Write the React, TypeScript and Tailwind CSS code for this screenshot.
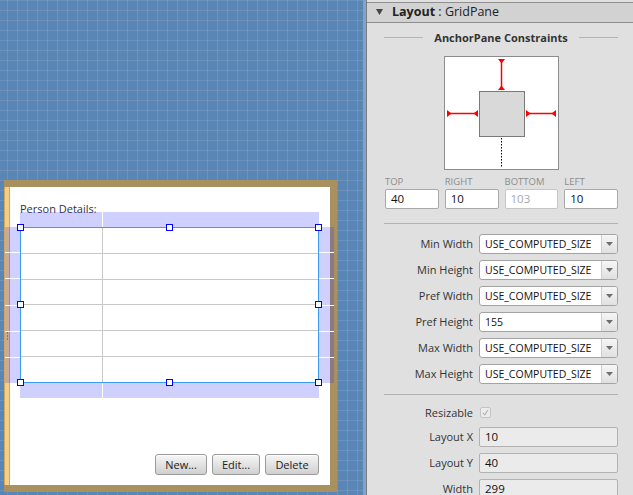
import React from "react";

const sizeRows = [
  { label: "Min Width", value: "USE_COMPUTED_SIZE" },
  { label: "Min Height", value: "USE_COMPUTED_SIZE" },
  { label: "Pref Width", value: "USE_COMPUTED_SIZE" },
  { label: "Pref Height", value: "155" },
  { label: "Max Width", value: "USE_COMPUTED_SIZE" },
  { label: "Max Height", value: "USE_COMPUTED_SIZE" },
];

const anchors = [
  { label: "TOP", value: "40", disabled: false },
  { label: "RIGHT", value: "10", disabled: false },
  { label: "BOTTOM", value: "103", disabled: true },
  { label: "LEFT", value: "10", disabled: false },
];

function Handle({ className }: { className: string }) {
  return <div className={`absolute z-20 h-[7px] w-[7px] border-[1.5px] border-[#0000ff] bg-white ${className}`} />;
}

// lavender band with white divider lines, drawn around the selected GridPane
function RowBand({ className }: { className: string }) {
  return (
    <div className={`absolute top-0 bottom-0 z-10 flex w-[15px] flex-col divide-y divide-white bg-[rgba(40,40,255,0.22)] ${className}`}>
      {[0, 1, 2, 3, 4, 5].map((i) => (
        <div key={i} className="flex-1" />
      ))}
    </div>
  );
}

function ColBand({ className }: { className: string }) {
  return (
    <div className={`absolute left-0 right-0 z-10 flex h-[15px] bg-[rgba(40,40,255,0.22)] ${className}`}>
      <div className="w-[83px] border-r border-white" />
      <div className="flex-1" />
    </div>
  );
}

function Canvas() {
  return (
    <div className="relative h-full w-[366px] shrink-0 border-r-[3px] border-[#7fa3ca] bg-[#5a86b6] bg-[linear-gradient(to_right,rgba(255,255,255,0.1)_1px,transparent_1px),linear-gradient(to_bottom,rgba(255,255,255,0.1)_1px,transparent_1px)] bg-[length:10px_10px] bg-[position:7px_0px]">
      {/* the designed window */}
      <div className="absolute left-[4px] top-[180px] flex h-[312px] w-[333px] bg-[#a8905f] py-[7px] pr-[7px]">
        <div className="flex w-[7px] flex-col items-center justify-center gap-px border-x border-[#d6a658] bg-[#f4cd88]">
          <div className="h-[2px] w-px bg-[#a88a5a]" />
          <div className="h-[2px] w-px bg-[#a88a5a]" />
          <div className="h-[2px] w-px bg-[#a88a5a]" />
        </div>
        <div className="flex flex-1 flex-col bg-white pb-[10px] pl-[10px] pr-[11px]">
          <div className="pt-[14px] text-[11px] leading-[16px] text-[#333]">Person Details:</div>

          <div className="relative mt-[10px] h-[156px] w-[299px]">
            <ColBand className="-top-[15px]" />
            <ColBand className="-bottom-[15px]" />
            <RowBand className="-left-[15px]" />
            <RowBand className="-right-[15px]" />

            <div className="flex h-full flex-col divide-y divide-[#c8c8c8] border border-[#3b9cf5] bg-white">
              {[0, 1, 2, 3, 4, 5].map((i) => (
                <div key={i} className="flex flex-1">
                  <div className="w-[82px] border-r border-[#c8c8c8]" />
                  <div className="flex-1" />
                </div>
              ))}
            </div>

            <Handle className="-left-[3px] -top-[3px]" />
            <Handle className="left-[146px] -top-[3px]" />
            <Handle className="-right-[3px] -top-[3px]" />
            <Handle className="-left-[3px] top-[74px]" />
            <Handle className="-right-[3px] top-[74px]" />
            <Handle className="-left-[3px] -bottom-[3px]" />
            <Handle className="left-[146px] -bottom-[3px]" />
            <Handle className="-right-[3px] -bottom-[3px]" />
          </div>

          <div className="mt-auto flex justify-end gap-[5px]">
            {[
              { t: "New...", w: "w-[52px]" },
              { t: "Edit...", w: "w-[48px]" },
              { t: "Delete", w: "w-[54px]" },
            ].map((b) => (
              <button
                key={b.t}
                className={`h-[21px] ${b.w} rounded-[3px] border border-[#9a9a9a] bg-[linear-gradient(to_bottom,#f6f6f6,#d0d0d0)] text-[11px] leading-[19px] text-[#222] shadow-[inset_0_1px_0_#ffffff]`}
              >
                {b.t}
              </button>
            ))}
          </div>
        </div>
      </div>
    </div>
  );
}

function AnchorDiagram() {
  return (
    <div className="mx-auto mt-[11px] h-[114px] w-[115px] border border-[#8c8c8c] bg-white">
      <svg width="113" height="112" viewBox="0 0 113 112">
        <rect x="34.5" y="34.5" width="45" height="45" fill="#d9d9d9" stroke="#7a7a7a" />
        {/* top */}
        <line x1="56.5" y1="2" x2="56.5" y2="32" stroke="#ff0000" strokeWidth="1.5" />
        <polygon points="53,2 60,2 56.5,6.5" fill="#ff0000" />
        <polygon points="53,33 60,33 56.5,28.5" fill="#ff0000" />
        {/* left */}
        <line x1="2" y1="56.5" x2="32" y2="56.5" stroke="#ff0000" strokeWidth="1.5" />
        <polygon points="2,53 2,60 6.5,56.5" fill="#ff0000" />
        <polygon points="33,53 33,60 28.5,56.5" fill="#ff0000" />
        {/* right */}
        <line x1="81" y1="56.5" x2="111" y2="56.5" stroke="#ff0000" strokeWidth="1.5" />
        <polygon points="81,53 81,60 85.5,56.5" fill="#ff0000" />
        <polygon points="111,53 111,60 106.5,56.5" fill="#ff0000" />
        {/* bottom, unset */}
        <line x1="56.5" y1="81" x2="56.5" y2="111" stroke="#000" strokeWidth="1" strokeDasharray="1.5 1.5" />
      </svg>
    </div>
  );
}

function Select({ value }: { value: string }) {
  return (
    <div className="flex h-[20px] overflow-hidden rounded-[3px] border border-[#a3a3a3] bg-white">
      <div className="min-w-0 flex-1 overflow-hidden whitespace-nowrap pl-[5px] text-[10.5px] leading-[18px] text-[#111]">{value}</div>
      <div className="flex w-[16px] shrink-0 items-center justify-center border-l border-[#cfcfcf] bg-[linear-gradient(to_bottom,#f6f6f6,#e0e0e0)]">
        <svg width="7" height="4" viewBox="0 0 7 4">
          <polygon points="0,0 7,0 3.5,4" fill="#6e6e6e" />
        </svg>
      </div>
    </div>
  );
}

function Inspector() {
  return (
    <div className="flex h-full flex-1 flex-col border-l border-[#7d7d7d] bg-[#e0e0e0] pt-[2px] text-[#333]">
      <div className="flex h-[23px] items-center gap-[9px] border-y border-[#8f8f8f] bg-[#d2d2d2] pl-[9px]">
        <svg width="7" height="6" viewBox="0 0 7 6">
          <polygon points="0,0 7,0 3.5,6" fill="#444" />
        </svg>
        <span className="text-[12.5px] text-[#222]">
          <b>Layout</b> : GridPane
        </span>
      </div>

      <div className="flex flex-col pl-[17px] pr-[15px]">
        <div className="mt-[8px] flex h-[14px] items-center gap-[11px]">
          <div className="h-px flex-1 bg-[#b4b4b4]" />
          <div className="text-[11px] font-bold leading-[14px] text-[#333]">AnchorPane Constraints</div>
          <div className="h-px flex-1 bg-[#b4b4b4]" />
        </div>

        <AnchorDiagram />

        <div className="mt-[6px] grid grid-cols-4 gap-x-[6px] pl-px">
          {anchors.map((a) => (
            <div key={a.label} className="flex flex-col">
              <div className="text-[9.5px] leading-[12px] text-[#8c8c8c]">{a.label}</div>
              <div
                className={`mt-px h-[20px] rounded-[2px] border bg-white pl-[5px] text-[11.5px] leading-[18px] ${
                  a.disabled ? "border-[#c6c6c6] text-[#a8a8a8]" : "border-[#a9a9a9] text-[#111]"
                }`}
              >
                {a.value}
              </div>
            </div>
          ))}
        </div>

        <div className="mt-[14px] h-px bg-[#b3b3b3]" />

        <div className="mt-[10px] grid grid-cols-[1fr_139px] gap-x-[6px] gap-y-[6px]">
          {sizeRows.map((r) => (
            <React.Fragment key={r.label}>
              <div className="text-right text-[11px] leading-[20px]">{r.label}</div>
              <Select value={r.value} />
            </React.Fragment>
          ))}
        </div>

        <div className="mt-[10px] h-px bg-[#b3b3b3]" />

        <div className="mt-[8px] grid grid-cols-[1fr_139px] gap-x-[6px] gap-y-[6px]">
          <div className="text-right text-[11px] leading-[20px]">Resizable</div>
          <div className="flex items-center pl-px">
            <div className="flex h-[11px] w-[11px] items-center justify-center rounded-[2px] border border-[#c4c4c4] bg-[#ececec]">
              <svg width="7" height="7" viewBox="0 0 7 7">
                <polyline points="1,3.8 2.8,5.8 6,1" fill="none" stroke="#b3b3b3" strokeWidth="1.2" />
              </svg>
            </div>
          </div>
          {[
            { label: "Layout X", value: "10" },
            { label: "Layout Y", value: "40" },
            { label: "Width", value: "299" },
          ].map((f, i) => (
            <React.Fragment key={f.label}>
              <div className={`text-right text-[11px] leading-[20px] ${i === 0 ? "-mt-[2px]" : ""}`}>{f.label}</div>
              <div
                className={`h-[20px] rounded-[2px] border border-[#b2b2b2] bg-[#ebebeb] pl-[5px] text-[11.5px] leading-[18px] text-[#111] ${
                  i === 0 ? "-mt-[2px]" : ""
                }`}
              >
                {f.value}
              </div>
            </React.Fragment>
          ))}
        </div>
      </div>
    </div>
  );
}

export default function App() {
  return (
    <div className="flex h-[495px] w-[633px] overflow-hidden font-['Open_Sans',sans-serif]">
      <Canvas />
      <Inspector />
    </div>
  );
}
